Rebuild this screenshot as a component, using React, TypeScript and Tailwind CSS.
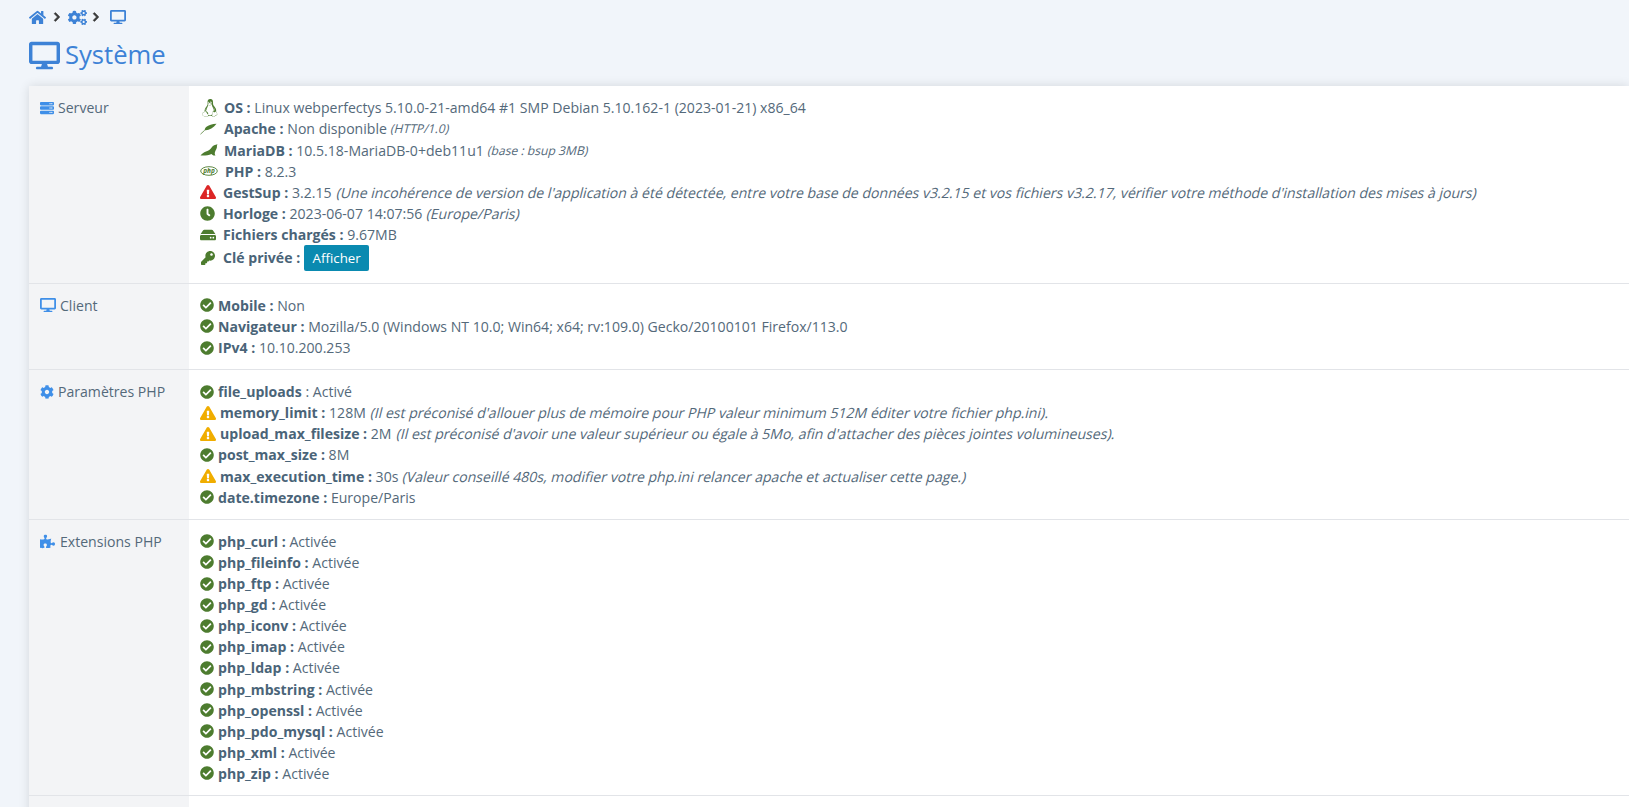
import type { ReactNode } from "react";
import { FaHome, FaCogs, FaDesktop, FaServer, FaCheckCircle, FaExclamationTriangle, FaClock, FaHdd, FaKey, FaCog, FaPuzzlePiece, FaLinux, FaChevronRight } from "react-icons/fa";

const GREEN = "text-[#4d7c2f]";

function Ok() {
  return <FaCheckCircle className={`inline-block shrink-0 text-[14px] ${GREEN} mr-[4px]`} />;
}
function Warn() {
  return <FaExclamationTriangle className="inline-block shrink-0 text-[16px] text-[#f0ad00] mr-[4px]" />;
}

// the page's italics are a slanted regular face, not the real italic
function Slant({ small, children }: { small?: boolean; children: ReactNode }) {
  return (
    <span className={`inline-block -skew-x-[14deg] ${small ? "text-[12.16px] ml-[4px]" : "ml-[5px]"}`}>{children}</span>
  );
}

function Feather() {
  return (
    <svg viewBox="0 0 18 14" className={`w-[17px] h-[14px] mr-[7px] shrink-0 ${GREEN}`} fill="currentColor">
      <path d="M17.500 1.500C13 1.500 9 3 6.500 5 5.500 6 5 7 5 8.300 9 8.800 14 6.500 17.500 1.500Z" />
      <path d="M0.500 12.500 5 8.300" stroke="currentColor" strokeWidth="0.8" />
    </svg>
  );
}

function Seal() {
  return (
    <svg viewBox="0 0 18 12" className={`w-[18px] h-[12px] mr-[6px] shrink-0 ${GREEN}`} fill="currentColor">
      <path d="M0.500 11.500C2 9.500 3.500 8.500 6 7.500 9 6.500 10.500 5 12 3 13 1.500 15 1 17.500 0.300 17 1.500 16.800 2 17 3 16.500 5 15.500 6.500 15 8 14.500 9.500 14.800 10.500 15.500 11.500L13.500 11.500C12.500 11 12 10.500 11.500 10 9 11 6 11.500 3 11.500Z" />
    </svg>
  );
}

function PhpLogo() {
  return (
    <svg viewBox="0 0 18 10" className={`w-[18px] h-[10px] mr-[7px] shrink-0 ${GREEN}`}>
      <ellipse cx="9" cy="5" rx="8.300" ry="4.300" fill="none" stroke="currentColor" strokeWidth="0.9" />
      <text x="9" y="7" textAnchor="middle" fontSize="6.500" fontWeight="700" fontStyle="italic" fill="currentColor">php</text>
    </svg>
  );
}

function Line({ icon, label, children }: { icon: ReactNode; label: string; children?: ReactNode }) {
  return (
    <div className="flex items-center h-[21.12px] whitespace-nowrap">
      {icon}
      <b className="font-bold text-[#4a6478]">{label}</b>
      <span className="whitespace-pre"> </span>
      {children}
    </div>
  );
}

function Row({ icon, title, children }: { icon: ReactNode; title: string; children: ReactNode }) {
  return (
    <div className="flex border-b border-[#e2e4e8]">
      <div className="w-[160px] shrink-0 bg-[#f3f4f6] pl-[11px] pt-[11px]">
        <div className="flex items-center h-[21px]">
          {icon}
          <span>{title}</span>
        </div>
      </div>
      <div className="flex-1 pl-[11px] py-[11px]">{children}</div>
    </div>
  );
}

const EXT = ["php_curl", "php_fileinfo", "php_ftp", "php_gd", "php_iconv", "php_imap", "php_ldap", "php_mbstring", "php_openssl", "php_pdo_mysql", "php_xml", "php_zip"];
const B = "text-[#3f8fe8] mr-[4px] shrink-0";
const CHEVRON = "text-[10px] text-[#3a3a3a] stroke-[40px]";

export default function App() {
  return (
    <div className="h-screen overflow-hidden bg-[#f1f5fa] text-[14.08px] leading-[21.12px] text-[#54697a] font-['Open_Sans',sans-serif]">
      <div className="flex items-center pl-[29px] pt-[8px] h-[26px] text-[#3d82d6]">
        <FaHome className="text-[17px] mr-[6px]" />
        <FaChevronRight className={`${CHEVRON} mr-[6px]`} />
        <FaCogs className="text-[19px] mr-[4px]" />
        <FaChevronRight className={`${CHEVRON} mr-[9px]`} />
        <FaDesktop className="text-[16px]" />
      </div>
      <div className="flex items-center pl-[29px] mt-[14px] h-[30px] text-[25.6px] text-[#3d82d6]">
        <FaDesktop className="text-[31px] mr-[5px]" />
        Système
      </div>
      <div className="mt-[16px] ml-[29px] bg-white shadow-[0_0_10px_rgba(0,0,0,0.12)]">
        <Row icon={<FaServer className={`text-[14px] ${B}`} />} title="Serveur">
          <div className="pt-[0.3px]">
            <Line icon={<FaLinux className={`text-[18px] ${GREEN} mr-[5px] ml-[1px]`} />} label="OS :">Linux webperfectys 5.10.0-21-amd64 #1 SMP Debian 5.10.162-1 (2023-01-21) x86_64</Line>
            <Line icon={<Feather />} label="Apache :">Non disponible <Slant small>(HTTP/1.0)</Slant></Line>
            <Line icon={<Seal />} label="MariaDB :">10.5.18-MariaDB-0+deb11u1 <Slant small>(base : bsup 3MB)</Slant></Line>
            <Line icon={<PhpLogo />} label="PHP :">8.2.3</Line>
            <Line icon={<FaExclamationTriangle className="text-[16px] text-[#dc2626] mr-[7px]" />} label="GestSup :">3.2.15 <Slant>(Une incohérence de version de l'application à été détectée, entre votre base de données v3.2.15 et vos fichiers v3.2.17, vérifier votre méthode d'installation des mises à jours)</Slant></Line>
            <Line icon={<FaClock className={`text-[15px] ${GREEN} mr-[8px]`} />} label="Horloge :">2023-06-07 14:07:56 <Slant>(Europe/Paris)</Slant></Line>
            <Line icon={<FaHdd className={`text-[16px] ${GREEN} mr-[7px]`} />} label="Fichiers chargés :">9.67MB</Line>
            <div className="flex items-center h-[26.7px] whitespace-nowrap">
              <FaKey className={`text-[14px] ${GREEN} mr-[8px] ml-[1px]`} />
              <b className="font-bold text-[#4a6478] mr-[4px] -mt-[2px]">Clé privée :</b>
              <button className="h-[26px] w-[65px] rounded-[2px] bg-[#0a8ab0] text-white text-[13.3px]">Afficher</button>
            </div>
          </div>
        </Row>
        <Row icon={<FaDesktop className={`text-[16px] ${B}`} />} title="Client">
          <Line icon={<Ok />} label="Mobile :">Non</Line>
          <Line icon={<Ok />} label="Navigateur :">Mozilla/5.0 (Windows NT 10.0; Win64; x64; rv:109.0) Gecko/20100101 Firefox/113.0</Line>
          <Line icon={<Ok />} label="IPv4 :">10.10.200.253</Line>
        </Row>
        <Row icon={<FaCog className={`text-[14px] ${B}`} />} title="Paramètres PHP">
          <Line icon={<Ok />} label="file_uploads">: Activé</Line>
          <Line icon={<Warn />} label="memory_limit :">128M <Slant>(Il est préconisé d'allouer plus de mémoire pour PHP valeur minimum 512M éditer votre fichier php.ini).</Slant></Line>
          <Line icon={<Warn />} label="upload_max_filesize :">2M <Slant>(Il est préconisé d'avoir une valeur supérieur ou égale à 5Mo, afin d'attacher des pièces jointes volumineuses).</Slant></Line>
          <Line icon={<Ok />} label="post_max_size :">8M</Line>
          <Line icon={<Warn />} label="max_execution_time :">30s <Slant>(Valeur conseillé 480s, modifier votre php.ini relancer apache et actualiser cette page.)</Slant></Line>
          <Line icon={<Ok />} label="date.timezone :">Europe/Paris</Line>
        </Row>
        <Row icon={<FaPuzzlePiece className={`text-[15px] ${B} mr-[5px]`} />} title="Extensions PHP">
          {EXT.map((e) => (
            <Line key={e} icon={<Ok />} label={`${e} :`}>Activée</Line>
          ))}
        </Row>
        <Row icon={null} title="">
          <div className="h-[40px]" />
        </Row>
      </div>
    </div>
  );
}
